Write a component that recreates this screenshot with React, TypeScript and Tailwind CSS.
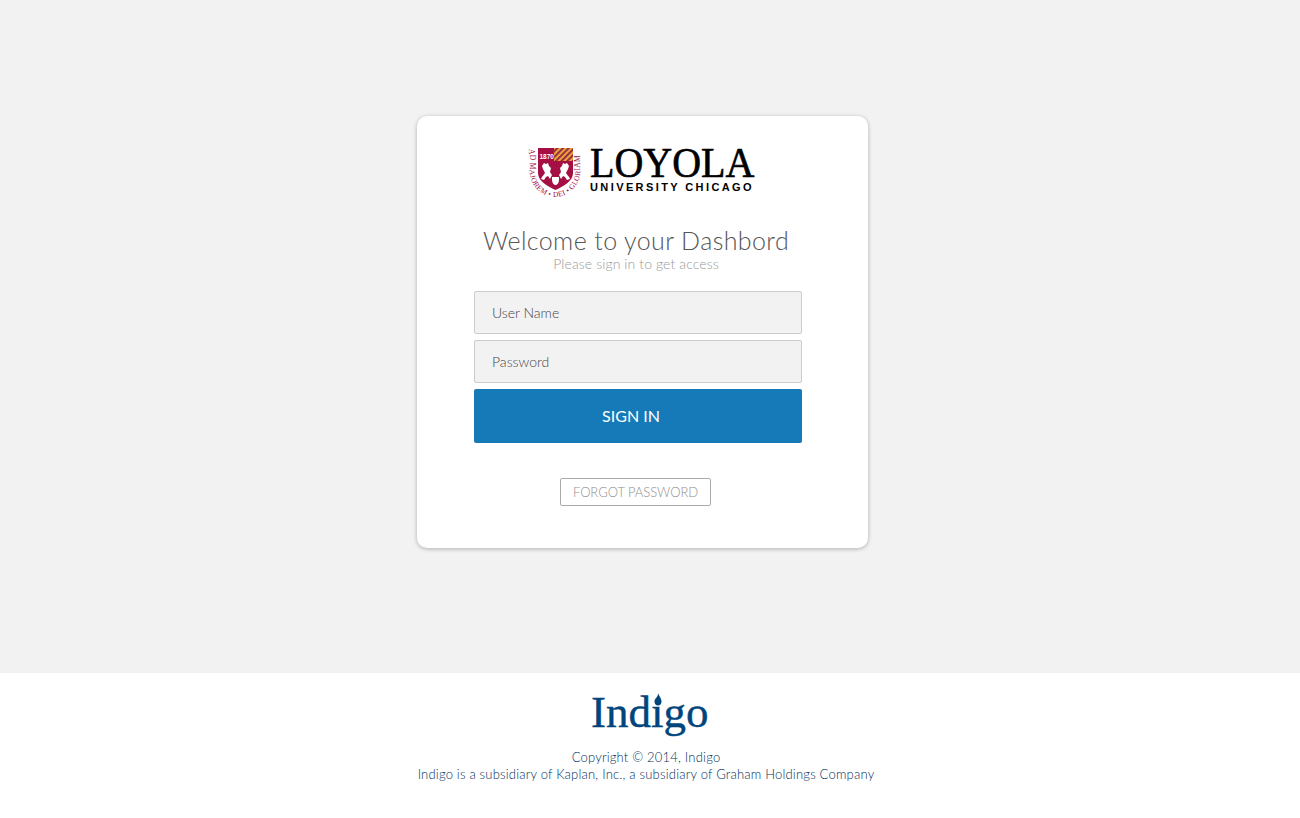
const bodyFont = "font-['Lato','Open_Sans',sans-serif] font-light"

const LoyolaCrest = () => (
  <svg width="54" height="50" viewBox="0 0 54 50" className="shrink-0">
    <defs>
      <path id="crest-ring" d="M1.500 1 V22 C1.500 38 14 49 27 49 C40 49 52.500 38 52.500 22 V1" fill="none" />
      <pattern id="crest-stripes" width="4" height="4" patternUnits="userSpaceOnUse" patternTransform="rotate(-45)">
        <rect width="4" height="4" fill="#e9a23b" />
        <rect width="4" height="1.700" fill="#8c1d40" />
      </pattern>
    </defs>
    <path d="M10 0 H45 V25 C45 33 36 38 27.500 42 C19 38 10 33 10 25 Z" fill="#a50f43" />
    <rect x="26" y="0" width="19" height="13" fill="url(#crest-stripes)" />
    <text x="11.500" y="10.500" fill="#fff" fontSize="6.500" fontWeight="700" fontFamily="Liberation Sans, sans-serif">1870</text>
    <path d="M13 31 C14 28 16 27 17 25 L15 21 L14 18 L16 15 L18 16 L20 15 L21 18 L23 20 L22 24 L24 27 L22 31 L20 28 L18 29 L16 32 Z" fill="#fff" />
    <path d="M42 31 C41 28 39 27 38 25 L40 21 L41 18 L39 15 L37 16 L35 15 L34 18 L32 20 L33 24 L31 27 L33 31 L35 28 L37 29 L39 32 Z" fill="#fff" />
    <path d="M24 29 H31 V32 C31 35 29 37 27.500 37 C26 37 24 35 24 32 Z" fill="#fff" />
    <text fill="#a50f43" fontSize="7.500" fontFamily="Liberation Serif, serif">
      <textPath href="#crest-ring" textLength="118" lengthAdjust="spacing">AD MAJOREM • DEI • GLORIAM</textPath>
    </text>
  </svg>
)

const LoyolaLogo = () => (
  <div className="ml-[8px] flex items-start gap-[8px]">
    <LoyolaCrest />
    <div className="flex w-[166px] flex-col">
      <span className="h-[32px] origin-bottom scale-y-[1.08] whitespace-nowrap font-['Liberation_Serif',serif] text-[40px] leading-[32px] text-black [-webkit-text-stroke:0.6px_black]">LOYOLA</span>
      <span className="mt-[1px] whitespace-nowrap font-['Liberation_Sans',sans-serif] text-[11px] font-bold leading-[12px] tracking-[2.400px] text-black">UNIVERSITY CHICAGO</span>
    </div>
  </div>
)

const IndigoLogo = () => (
  <div className="relative h-[48px] w-[118px] whitespace-nowrap font-['Liberation_Serif',serif] text-[45px] leading-[42px] text-[#00457c] [-webkit-text-stroke:0.4px_#00457c]">
    Indıgo
    <svg width="8" height="13" viewBox="0 0 8 13" className="absolute left-[63px] top-[2px]">
      <path d="M4.500 0 C4.500 3 7.500 5 7.500 8.500 C7.500 11 6 12.500 4 12.500 C2 12.500 0.500 11 0.500 8.500 C0.500 5.500 4 4 4.500 0 Z" fill="#00457c" />
    </svg>
  </div>
)

export default function App() {
  return (
    <div className={`flex h-[818px] flex-col bg-white ${bodyFont}`}>
      <main className="flex h-[673px] items-start justify-center bg-[#f2f2f2] pt-[116px] pr-[15px]">
        <div className="flex h-[432px] w-[451px] flex-col rounded-[10px] bg-white pt-[32px] pr-[66px] pl-[57px] shadow-[0_1px_4px_rgba(0,0,0,0.28)]">
          <div className="flex justify-center">
            <LoyolaLogo />
          </div>
          <h1 className="mt-[25px] -ml-[4px] text-center text-[25px] leading-[34px] font-light tracking-[0.400px] text-[#555]">Welcome to your Dashbord</h1>
          <p className="-ml-[4px] text-center text-[14px] leading-[14px] tracking-[0.100px] text-[#999]">Please sign in to get access</p>
          <form className="mt-[20px] flex flex-col gap-[6px]">
            <input
              type="text"
              placeholder="User Name"
              className="h-[43px] w-[328px] rounded-[2px] border border-[#ccc] bg-[#f2f2f2] px-[17px] text-[14px] outline-none placeholder:text-[#444]"
            />
            <input
              type="password"
              placeholder="Password"
              className="h-[43px] w-[328px] rounded-[2px] border border-[#ccc] bg-[#f2f2f2] px-[17px] text-[14px] outline-none placeholder:text-[#444]"
            />
            <button type="button" className="h-[54px] w-[328px] rounded-[2px] bg-[#167ab8] pr-[14px] text-[16px] font-normal text-white">SIGN IN</button>
          </form>
          <div className="mt-[35px] flex justify-center pr-[5px]">
            <a className="flex h-[28px] w-[151px] items-center justify-center rounded-[2px] border border-[#aaa] pt-[1px] text-[13px] tracking-[-0.050px] text-[#8f8f8f]">FORGOT PASSWORD</a>
          </div>
        </div>
      </main>
      <footer className="flex flex-col items-center pt-[18px]">
        <IndigoLogo />
        <p className="mt-[10px] pr-[8px] text-center text-[13px] leading-[17px] font-light tracking-[0.200px] text-[#002f5c]">
          Copyright © 2014, Indigo
          <br />
          Indigo is a subsidiary of Kaplan, Inc., a subsidiary of Graham Holdings Company
        </p>
      </footer>
    </div>
  )
}
